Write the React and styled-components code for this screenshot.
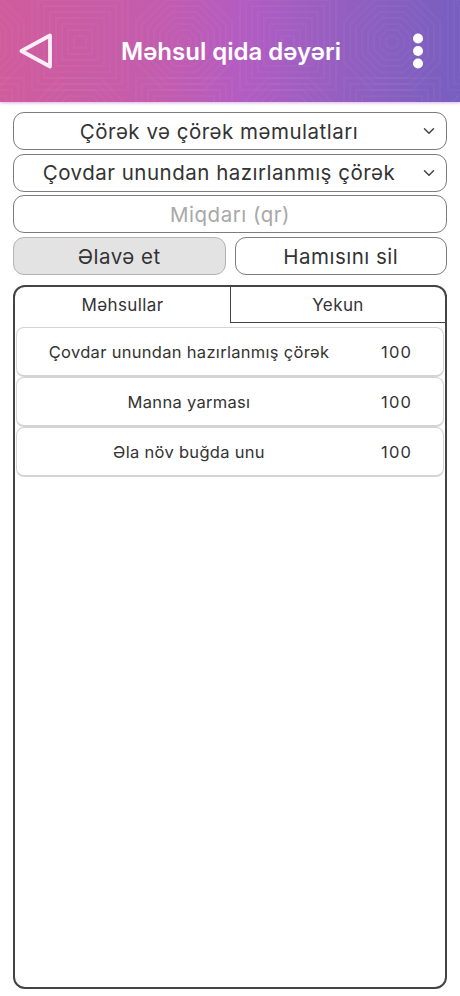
import React from "react";
import styled, { createGlobalStyle } from "styled-components";
import { ChevronDown } from "lucide-react";

const GlobalStyle = createGlobalStyle`
  html, body {
    margin: 0;
    padding: 0;
    background: #fff;
  }
  * {
    box-sizing: border-box;
  }
`;

const Page = styled.div`
  width: 460px;
  height: 996px;
  display: flex;
  flex-direction: column;
  font-family: "Inter", "Liberation Sans", sans-serif;
  color: #333;
  overflow: hidden;
`;

const Header = styled.header`
  position: relative;
  height: 102px;
  flex-shrink: 0;
  padding: 0 36px 0 19px;
  display: flex;
  align-items: center;
  justify-content: space-between;
  background: linear-gradient(90deg, #d05c9c 0%, #c35cae 35%, #b45cc2 52%, #935fc0 75%, #775fc0 100%);
  box-shadow: 0 1px 3px rgba(190, 130, 210, 0.6);
`;

const HeaderPattern = styled.svg`
  position: absolute;
  inset: 0;
  width: 100%;
  height: 100%;
`;

const HeaderIcon = styled.svg`
  position: relative;
  display: block;
`;

const Title = styled.h1`
  position: relative;
  margin: 1px 0 0 -3px;
  font-family: "Inter", "Liberation Sans", sans-serif;
  font-size: 24px;
  font-weight: 600;
  color: #fff;
`;

const Form = styled.div`
  padding: 10px 13px 0;
  display: flex;
  flex-direction: column;
  gap: 3.7px;
`;

const Field = styled.div`
  position: relative;
  height: 38px;
  border: 1.5px solid #7c7c7c;
  border-radius: 11px;
  display: flex;
  align-items: center;
  justify-content: center;
  padding-right: ${({ $select }) => ($select ? "22px" : "0")};
  font-size: 20.5px;
  letter-spacing: 0.5px;
  color: ${({ $placeholder }) => ($placeholder ? "#a8a8a8" : "#333")};
`;

const Arrow = styled(ChevronDown)`
  position: absolute;
  right: 8px;
  top: 9px;
  color: #444;
`;

const ButtonRow = styled.div`
  display: flex;
  gap: 9px;
`;

const Button = styled.button`
  flex: 1;
  height: 38px;
  padding: 0;
  border: 1.5px solid ${({ $active }) => ($active ? "#b4b4b4" : "#7c7c7c")};
  border-radius: 11px;
  background: ${({ $active }) => ($active ? "#e3e3e3" : "#fff")};
  font-family: inherit;
  font-size: 20.5px;
  letter-spacing: 0.5px;
  color: #333;
`;

const Panel = styled.section`
  margin: 10px 13px 7px;
  flex: 1;
  border: 2px solid #444;
  border-radius: 12px;
  display: flex;
  flex-direction: column;
  overflow: hidden;
`;

const Tabs = styled.div`
  height: 36px;
  flex-shrink: 0;
  display: grid;
  grid-template-columns: 215px 1fr;
`;

const Tab = styled.div`
  display: flex;
  align-items: center;
  justify-content: center;
  font-size: 17px;
  letter-spacing: 0.4px;
  border-left: ${({ $active }) => ($active ? "none" : "1.5px solid #444")};
  border-bottom: ${({ $active }) => ($active ? "none" : "1.5px solid #444")};
`;

const List = styled.div`
  padding: 4px 1px 0;
  display: flex;
  flex-direction: column;
`;

const Row = styled.div`
  height: 50px;
  display: grid;
  grid-template-columns: 344px 1fr;
  align-items: center;
  border: 1.5px solid #d4d4d4;
  border-bottom-width: 2px;
  border-radius: 8px;
  font-size: 16.5px;
  letter-spacing: 0.3px;
`;

const RowName = styled.span`
  text-align: center;
`;

const RowAmount = styled.span`
  padding-left: 20px;
  letter-spacing: 1.2px;
`;

const rows = [
  { name: "Çovdar unundan hazırlanmış çörək", amount: 100 },
  { name: "Manna yarması", amount: 100 },
  { name: "Əla növ buğda unu", amount: 100 },
];

// concentric octagons and squares of the header wallpaper
function Wallpaper() {
  const octagon = (cx, cy, r) => {
    const k = r * 0.414;
    return `M${cx - k} ${cy - r}H${cx + k}L${cx + r} ${cy - k}V${cy + k}L${cx + k} ${cy + r}H${cx - k}L${cx - r} ${cy + k}V${cy - k}Z`;
  };
  const cells = [];
  for (let i = -1; i < 5; i++) {
    for (let j = 0; j < 2; j++) {
      const cx = i * 104 + 80;
      const cy = j * 84 + 42;
      const rings = [6, 12, 18, 24, 30, 36, 42, 48];
      rings.forEach((r) => {
        if ((i + j) % 2 === 0) {
          cells.push(<rect key={`${i}-${j}-${r}`} x={cx - r} y={cy - r} width={r * 2} height={r * 2} />);
        } else {
          cells.push(<path key={`${i}-${j}-${r}`} d={octagon(cx, cy, r)} />);
        }
      });
    }
  }
  return (
    <HeaderPattern viewBox="0 0 460 102" preserveAspectRatio="none">
      <g fill="none" stroke="#fff" strokeOpacity="0.03" strokeWidth="2">
        {cells}
      </g>
    </HeaderPattern>
  );
}

function App() {
  return (
    <Page>
      <GlobalStyle />
      <Header>
        <Wallpaper />
        <HeaderIcon width="34" height="36" viewBox="0 0 34 36">
          <path d="M31 2.5 L2.5 18 L31 33.5 Z" fill="none" stroke="#fbeef6" strokeWidth="3.8" strokeLinejoin="round" />
        </HeaderIcon>
        <Title>Məhsul qida dəyəri</Title>
        <HeaderIcon width="12" height="36" viewBox="0 0 12 36">
          <circle cx="6" cy="5.5" r="5" fill="#fff" />
          <circle cx="6" cy="18" r="5" fill="#fff" />
          <circle cx="6" cy="30.5" r="5" fill="#fff" />
        </HeaderIcon>
      </Header>
      <Form>
        <Field $select>
          Çörək və çörək məmulatları
          <Arrow size={18} strokeWidth={2} />
        </Field>
        <Field $select>
          Çovdar unundan hazırlanmış çörək
          <Arrow size={18} strokeWidth={2} />
        </Field>
        <Field $placeholder>Miqdarı (qr)</Field>
        <ButtonRow>
          <Button $active>Əlavə et</Button>
          <Button>Hamısını sil</Button>
        </ButtonRow>
      </Form>
      <Panel>
        <Tabs>
          <Tab $active>Məhsullar</Tab>
          <Tab>Yekun</Tab>
        </Tabs>
        <List>
          {rows.map((row) => (
            <Row key={row.name}>
              <RowName>{row.name}</RowName>
              <RowAmount>{row.amount}</RowAmount>
            </Row>
          ))}
        </List>
      </Panel>
    </Page>
  );
}

export default App;
